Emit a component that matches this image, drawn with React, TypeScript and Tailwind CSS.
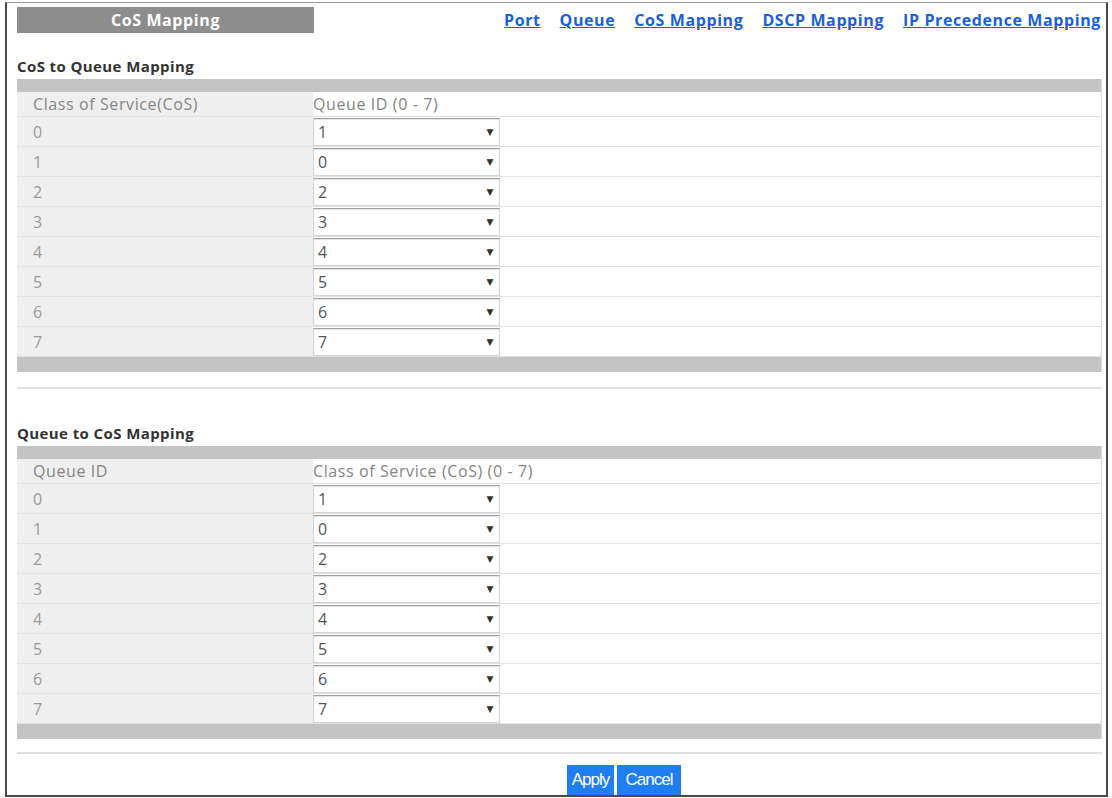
import React from 'react';

const font = { fontFamily: '"Open Sans", "DejaVu Sans", sans-serif' };

const links = ['Port', 'Queue', 'CoS Mapping', 'DSCP Mapping', 'IP Precedence Mapping'];

const SelectBox: React.FC<{ value: number }> = ({ value }) => (
  <div className="flex h-[28px] w-[187px] items-center justify-between border border-[#d4d4d4] border-t-[#a0a0a0] bg-white pl-[4px] pr-[5px] text-[16px] tracking-[0.6px] text-[#555] shadow-[inset_0_1px_1px_rgba(0,0,0,0.12)]">
    <span>{value}</span>
    <span className="text-[9px] text-[#333]">▼</span>
  </div>
);

const MappingTable: React.FC<{
  title: string;
  leftHead: string;
  rightHead: string;
  values: number[];
}> = ({ title, leftHead, rightHead, values }) => (
  <div>
    <div className="h-[14px] text-[15px] font-bold leading-[14px] tracking-[0.4px] text-[#333]">{title}</div>
    <div className="mt-[6px] border-r border-[#dcdcdc]">
      <div className="h-[13px] bg-[#c4c4c4]" />
      {/* header row */}
      <div className="flex h-[25px] border-b border-[#e2e2e2] text-[16px] tracking-[0.6px] text-[#858585]">
        <div className="flex w-[296px] items-center bg-[#efefef] pl-[16px]">{leftHead}</div>
        <div className="flex items-center">{rightHead}</div>
      </div>
      {values.map((v, i) => (
        <div key={i} className="flex h-[30px] border-b border-[#e2e2e2]">
          <div className="flex w-[296px] items-center bg-[#efefef] pl-[16px] text-[16px] text-[#9a9a9a]">{i}</div>
          <div className="flex items-center">
            <SelectBox value={v} />
          </div>
        </div>
      ))}
      <div className="h-[15px] bg-[#c4c4c4]" />
    </div>
  </div>
);

export default function App() {
  return (
    <div className="h-[798px] w-[1112px] bg-white pl-[5px] pt-[2px]" style={font}>
      <div className="h-[795px] w-[1103px] border-x-2 border-b-2 border-t border-x-[#4a4a4a] border-b-[#4a4a4a] border-t-[#9a9a9a] pl-[10px] pr-[4px]">
        {/* top bar */}
        <div className="mt-[4px] flex items-center justify-between">
          <div className="flex h-[26px] w-[297px] items-center justify-center bg-[#8d8d8d] text-[16px] font-bold tracking-[0.6px] text-white">
            CoS Mapping
          </div>
          <div className="flex gap-[19px] pr-[1px] text-[16px] font-bold tracking-[0.6px]">
            {links.map((l) => (
              <a key={l} href="#" className="text-[#1c5fd4] underline">
                {l}
              </a>
            ))}
          </div>
        </div>

        <div className="mt-[26px]">
          <MappingTable
            title="CoS to Queue Mapping"
            leftHead="Class of Service(CoS)"
            rightHead="Queue ID (0 - 7)"
            values={[1, 0, 2, 3, 4, 5, 6, 7]}
          />
        </div>
        <div className="mt-[15px] h-[2px] bg-[#e0e0e0]" />

        <div className="mt-[37px]">
          <MappingTable
            title="Queue to CoS Mapping"
            leftHead="Queue ID"
            rightHead="Class of Service (CoS) (0 - 7)"
            values={[1, 0, 2, 3, 4, 5, 6, 7]}
          />
        </div>
        <div className="mt-[13px] h-[2px] bg-[#e0e0e0]" />

        <div className="mt-[11px] flex gap-[3px] pl-[550px]" style={{ fontFamily: '"Liberation Sans", Arial, sans-serif' }}>
          <button className="h-[30px] w-[47px] bg-[#1f7ff2] text-[17px] tracking-[-1px] text-white">Apply</button>
          <button className="h-[30px] w-[64px] bg-[#1f7ff2] text-[17px] tracking-[-1px] text-white">Cancel</button>
        </div>
      </div>
    </div>
  );
}
